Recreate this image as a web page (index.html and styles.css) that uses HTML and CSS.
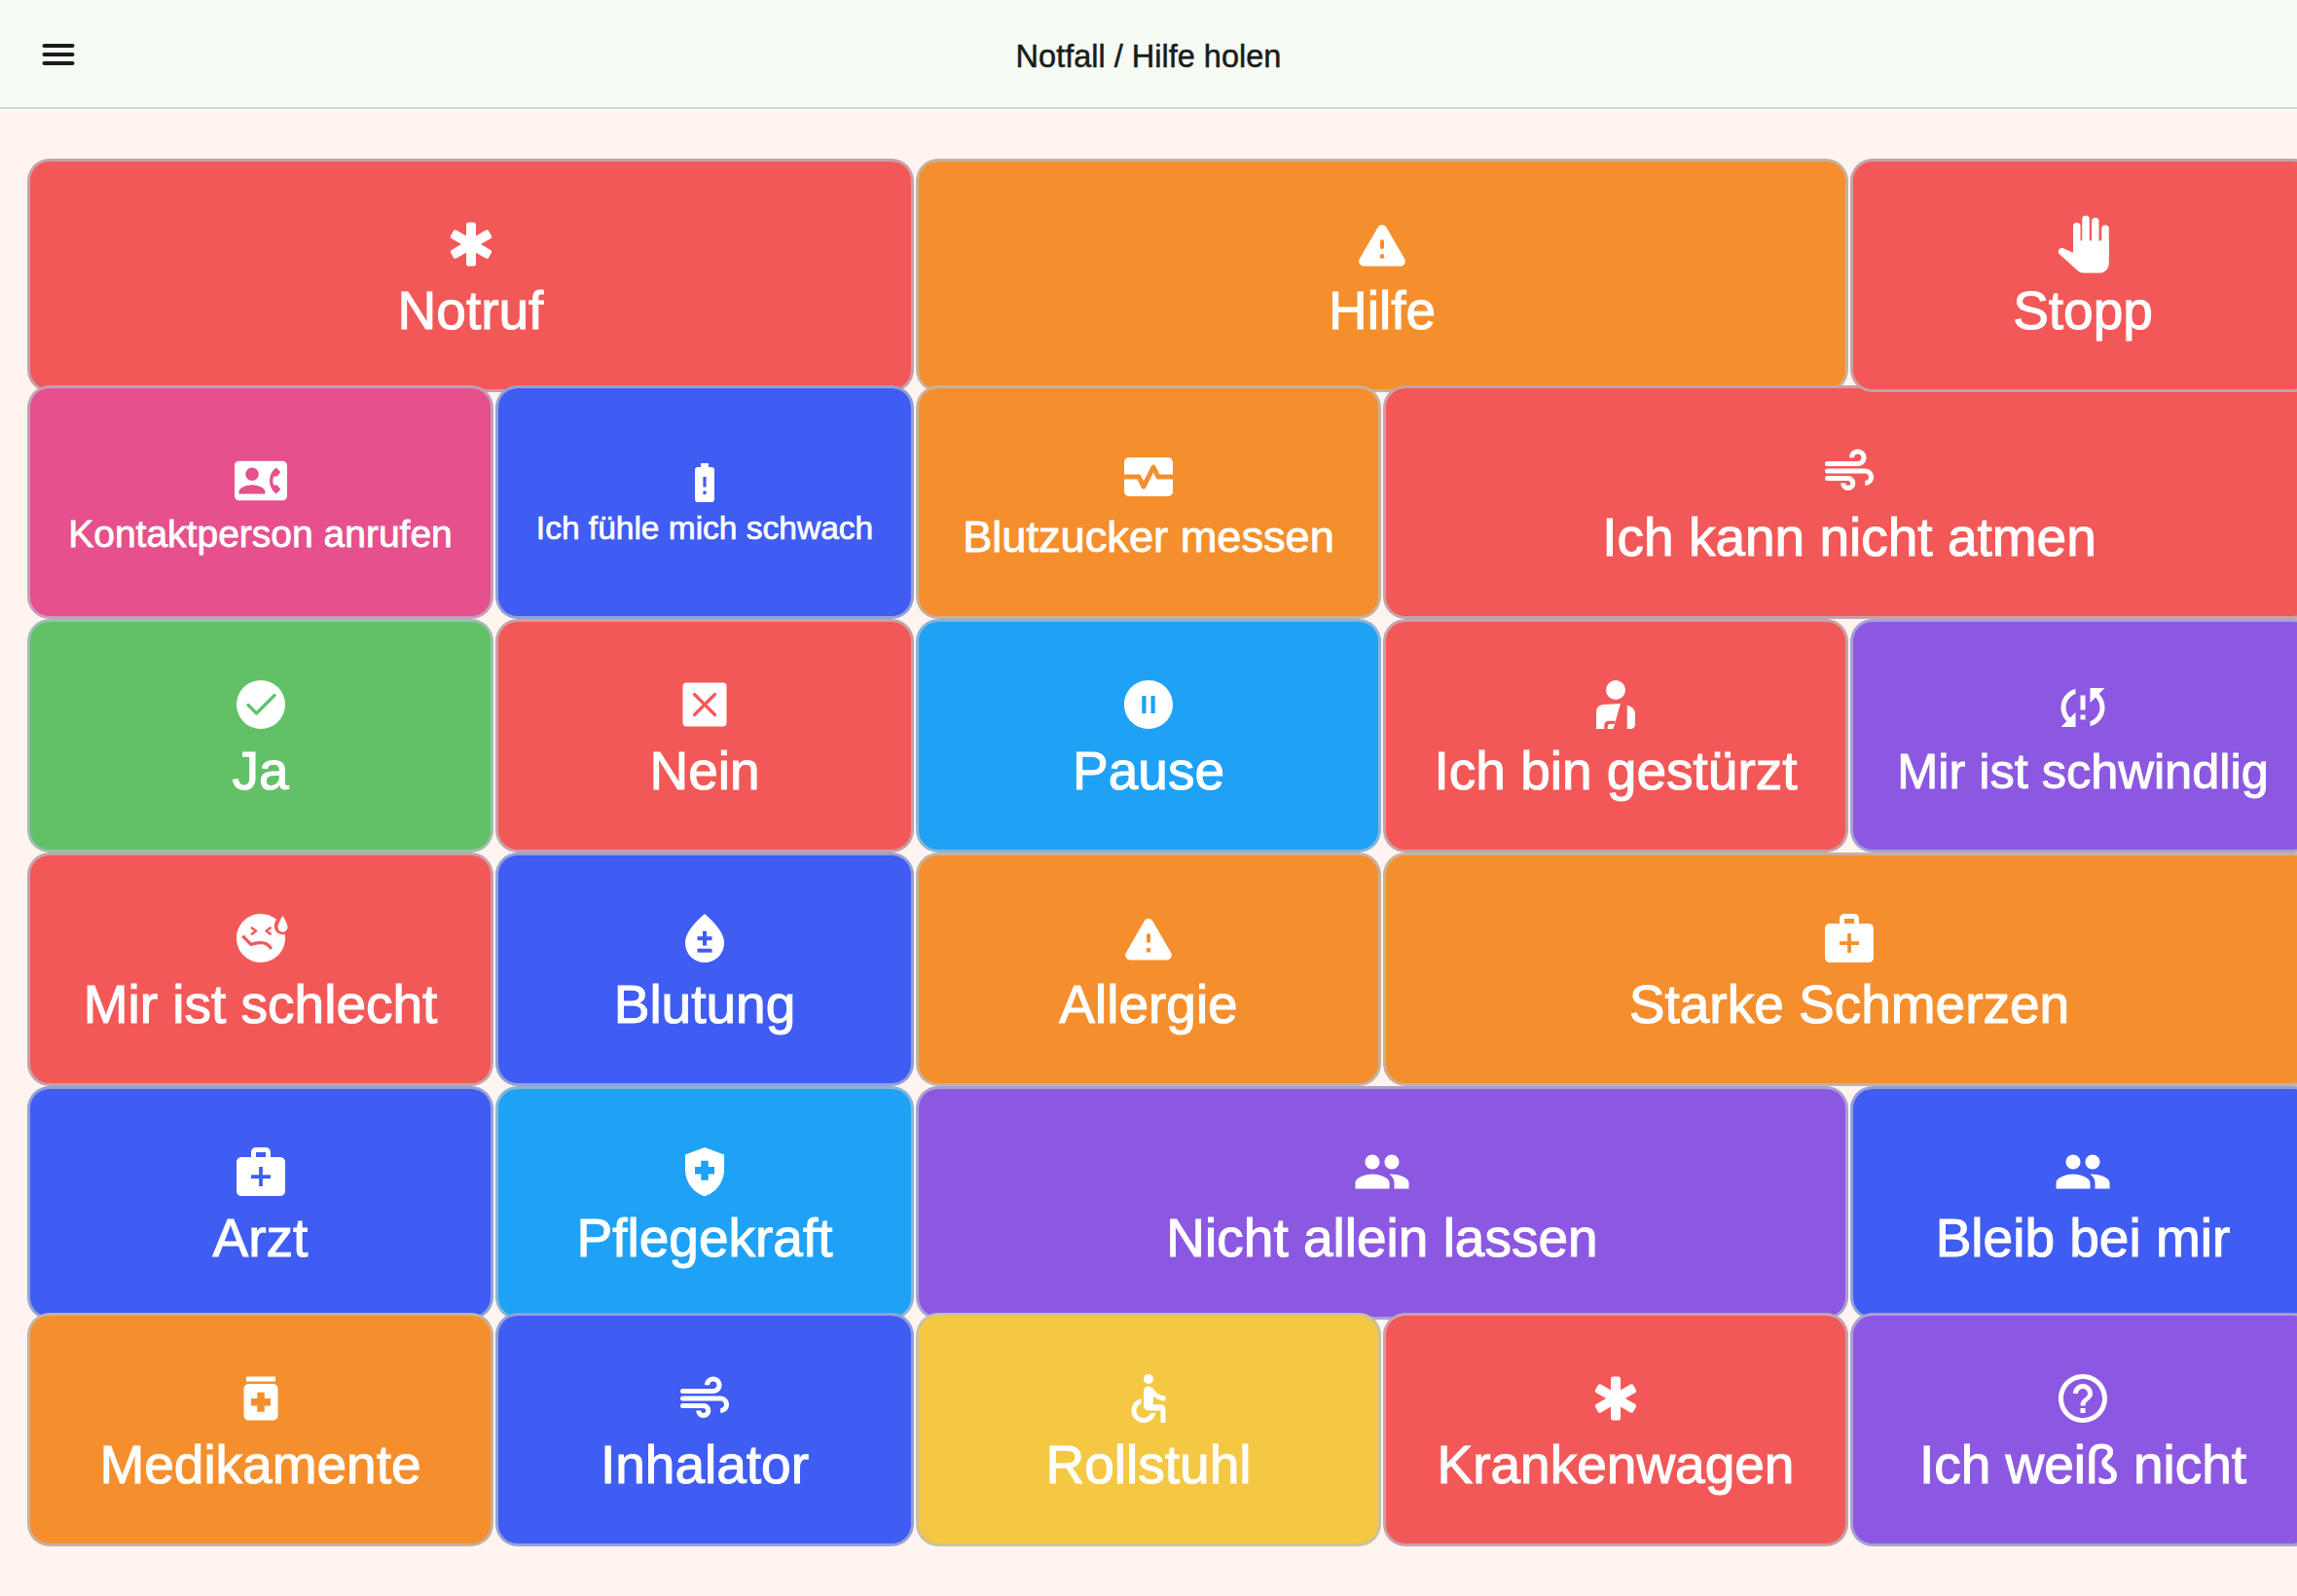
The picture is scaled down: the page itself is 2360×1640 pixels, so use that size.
FILE: index.html
```html
<!DOCTYPE html>
<html lang="de">
<head>
<meta charset="utf-8">
<title>Notfall / Hilfe holen</title>
<link rel="stylesheet" href="styles.css">
</head>
<body>
<svg class="defs" width="0" height="0" aria-hidden="true">
  <symbol id="i-emergency" viewBox="0 0 24 24"><rect x="10" y="3" width="4" height="18" rx="1"/><rect x="10" y="3" width="4" height="18" rx="1" transform="rotate(60 12 12)"/><rect x="10" y="3" width="4" height="18" rx="1" transform="rotate(-60 12 12)"/></symbol>
  <symbol id="i-warning" viewBox="0 0 24 24"><path fill-rule="evenodd" d="M4.470 21h15.060c1.540 0 2.500-1.670 1.730-3L13.730 4.990c-.77-1.330-2.690-1.330-3.460 0L2.740 18c-.77 1.330.19 3 1.730 3zM12 14c-.48 0-.8-.4-.8-.9v-2.200c0-.5.32-.9.8-.9s.8.4.8.9v2.200c0 .5-.32.9-.8.9zm.85 3.800h-1.700v-1.700h1.700v1.700z"/></symbol>
  <symbol id="i-air" viewBox="0 0 24 24"><path d="M14.500 17c0 1.650-1.350 3-3 3s-3-1.350-3-3h2c0 .55.45 1 1 1s1-.45 1-1-.45-1-1-1H3a1 1 0 0 1 0-2h8.500c1.650 0 3 1.350 3 3zM19 6.500C19 4.570 17.430 3 15.500 3S12 4.570 12 6.500h2c0-.83.67-1.500 1.500-1.500s1.500.67 1.500 1.500S16.330 8 15.500 8H3a1 1 0 0 0 0 2h12.500c1.930 0 3.500-1.570 3.500-3.500zm-.5 4.500H3a1 1 0 0 0 0 2h15.500c.83 0 1.500.67 1.500 1.500s-.67 1.500-1.500 1.500v2c1.930 0 3.500-1.570 3.500-3.500S20.430 11 18.500 11z"/></symbol>
  <symbol id="i-medical" viewBox="0 0 24 24"><path fill-rule="evenodd" d="M20 6h-4V4c0-1.100-.9-2-2-2h-4c-1.100 0-2 .9-2 2v2H4c-1.100 0-2 .9-2 2v12c0 1.100.9 2 2 2h16c1.100 0 2-.9 2-2V8c0-1.100-.9-2-2-2zM10 4h4v2h-4V4zm6 10.750h-3.250V18h-1.500v-3.250H8v-1.500h3.250V10h1.500v3.250H16v1.500z"/></symbol>
  <symbol id="i-group" viewBox="0 0 24 24"><path d="M16 11c1.660 0 2.990-1.340 2.990-3S17.660 5 16 5c-1.660 0-3 1.340-3 3s1.340 3 3 3zm-8 0c1.660 0 2.990-1.340 2.990-3S9.660 5 8 5C6.340 5 5 6.340 5 8s1.340 3 3 3zm0 2c-2.330 0-7 1.170-7 3.500V19h14v-2.500c0-2.330-4.670-3.500-7-3.500zm8 0c-.29 0-.62.02-.97.05 1.160.84 1.970 1.970 1.970 3.450V19h6v-2.500c0-2.330-4.670-3.500-7-3.500z"/></symbol>
</svg>

<header class="topbar">
  <button class="menu-btn" aria-label="Menü">
    <svg class="menu-icon" viewBox="0 0 24 24"><rect x="3" y="6" width="18" height="2.200" rx="1.100"/><rect x="3" y="10.900" width="18" height="2.200" rx="1.100"/><rect x="3" y="15.800" width="18" height="2.200" rx="1.100"/></svg>
  </button>
  <h1 class="title">Notfall / Hilfe holen</h1>
</header>

<main class="board">
  <button class="tile wide red">
    <svg class="icon"><use href="#i-emergency"/></svg><span class="label">Notruf</span>
  </button>
  <button class="tile wide orange">
    <svg class="icon"><use href="#i-warning"/></svg><span class="label">Hilfe</span>
  </button>
  <button class="tile pink">
    <svg class="icon icon-54" viewBox="0 0 24 24"><path fill-rule="evenodd" d="M22 3H2C.9 3 0 3.900 0 5v14c0 1.100.9 2 2 2h20c1.100 0 1.990-.9 1.990-2L24 5c0-1.100-.9-2-2-2zM8 6c1.660 0 3 1.340 3 3s-1.340 3-3 3-3-1.340-3-3 1.340-3 3-3zm6 12H2v-1c0-2 4-3.100 6-3.100s6 1.100 6 3.100v1zm3.850-4h1.640L21 16l-1.990 1.990c-1.310-.98-2.280-2.380-2.730-3.990-.18-.64-.28-1.310-.28-2s.1-1.360.28-2c.45-1.620 1.420-3.010 2.730-3.990L21 8l-1.510 2h-1.640c-.22.63-.35 1.300-.35 2s.13 1.370.35 2z"/></svg>
    <span class="label size-39">Kontaktperson anrufen</span>
  </button>
  <button class="tile tile-tight blue">
    <svg class="icon icon-48" viewBox="0 0 24 24"><path fill-rule="evenodd" d="M15.670 4H14V2h-4v2H8.330C7.600 4 7 4.600 7 5.330v15.330C7 21.400 7.600 22 8.330 22h7.330c.74 0 1.340-.6 1.340-1.330V5.330C17 4.600 16.400 4 15.670 4zM12.800 18h-1.600v-1.800h1.600V18zm0-3.700h-1.600V9h1.600v5.300z"/></svg>
    <span class="label size-33">Ich fühle mich schwach</span>
  </button>
  <button class="tile orange">
    <svg class="icon" viewBox="0 0 24 24"><path d="M15.110 12.450L14 10.240l-3.110 6.210c-.16.34-.51.55-.89.55s-.73-.21-.89-.55L7.380 13H2v5c0 1.100.9 2 2 2h16c1.100 0 2-.9 2-2v-5h-6c-.38 0-.73-.21-.89-.55z"/><path d="M20 4H4c-1.100 0-2 .9-2 2v5h6c.38 0 .73.21.89.55L10 13.760l3.110-6.210c.34-.68 1.450-.68 1.790 0L16.620 11H22V6c0-1.100-.9-2-2-2z"/></svg>
    <span class="label size-45">Blutzucker messen</span>
  </button>
  <button class="tile wide red">
    <svg class="icon"><use href="#i-air"/></svg><span class="label">Ich kann nicht atmen</span>
  </button>
  <button class="tile red stop">
    <svg class="icon" viewBox="0 0 24 24"><rect x="8" y="3.100" width="3" height="14" rx="1.500"/><rect x="11.700" y=".2" width="3" height="15" rx="1.500"/><rect x="15.600" y="1.100" width="3" height="15" rx="1.500"/><rect x="19.700" y="4.100" width="3" height="14" rx="1.500"/><path d="M8 10.500H22.700V20a3.800 3.800 0 0 1-3.800 3.800H12.500q-1.500 0-2.600-.9L2.500 16.200a1.500 1.500 0 0 1 1.400-2.600L8 15.500Z"/></svg>
    <span class="label">Stopp</span>
  </button>

  <button class="tile green">
    <svg class="icon" viewBox="0 0 24 24"><circle cx="12" cy="12" r="10"/><polyline class="cut cut-green" points="6.800,12.200 10.200,15.600 17.600,8.200"/></svg>
    <span class="label">Ja</span>
  </button>
  <button class="tile red">
    <svg class="icon" viewBox="0 0 24 24"><rect x="3" y="3" width="18" height="18" rx="1.500"/><path class="cut cut-red" d="M7.800 7.800 16.200 16.200M16.200 7.800 7.800 16.200"/></svg>
    <span class="label">Nein</span>
  </button>
  <button class="tile sky">
    <svg class="icon" viewBox="0 0 24 24"><path fill-rule="evenodd" d="M12 2C6.480 2 2 6.480 2 12s4.480 10 10 10 10-4.480 10-10S17.520 2 12 2zm-1 13.600H9.300V8.400H11v7.200zm3.700 0H13V8.400h1.700v7.200z"/></svg>
    <span class="label">Pause</span>
  </button>
  <button class="tile red">
    <svg class="icon" viewBox="0 0 24 24"><circle cx="12" cy="6" r="4"/><path fill-rule="evenodd" d="M4 22V15Q4 12.200 7 12L14 11.600 11 22ZM7.300 22V20.500Q7.300 18.700 9.200 18.700H11.800L11.400 20H9.600Q8.700 20 8.700 21V22Z"/><path d="M16.700 12.300Q20 13 20 16V20Q20 22 18 22H16.700Z"/></svg>
    <span class="label">Ich bin gestürzt</span>
  </button>
  <button class="tile purple">
    <svg class="icon" viewBox="0 0 24 24"><path d="M3 12c0 2.210.91 4.200 2.360 5.640L3 20h6v-6l-2.240 2.240C5.680 15.150 5 13.660 5 12c0-2.610 1.670-4.830 4-5.650V4.260C5.550 5.150 3 8.270 3 12zm8 5h2v-2h-2v2zM21 4h-6v6l2.240-2.240C18.320 8.850 19 10.340 19 12c0 2.610-1.670 4.830-4 5.650v2.090c3.450-.89 6-4.010 6-7.740 0-2.210-.91-4.200-2.360-5.640L21 4zm-10 9h2V7h-2v6z"/></svg>
    <span class="label size-50">Mir ist schwindlig</span>
  </button>

  <button class="tile red">
    <svg class="icon" viewBox="0 0 24 24"><path fill-rule="evenodd" d="M21 9.500c1.100 0 2-.9 2-2.200 0-1.200-2-4.500-2-4.500s-2 3.300-2 4.500c0 1.300.9 2.200 2 2.200zm-3.500-2.500c0-.73.41-1.710.92-2.660C16.680 2.880 14.440 2 11.990 2 6.470 2 2 6.480 2 12s4.470 10 9.990 10C17.520 22 22 17.520 22 12c0-.55-.06-1.090-.14-1.620-.28.07-.56.12-.86.12-1.930 0-3.500-1.570-3.500-3.500z"/><path class="cut cut-red cut-thin" d="M8.300 7.800 10 9 8.300 10.300M15.900 7.800 14.200 9 15.900 10.300"/><path class="cut cut-red" d="M4.900 11.500 8 14.600Q10 13.800 12 13.800 14.600 13.800 16 16"/></svg>
    <span class="label">Mir ist schlecht</span>
  </button>
  <button class="tile blue">
    <svg class="icon" viewBox="0 0 24 24"><path fill-rule="evenodd" d="M12 2c-5.330 4.550-8 8.480-8 11.800 0 4.980 3.800 8.200 8 8.200s8-3.220 8-8.200c0-3.320-2.670-7.250-8-11.800zm3 15.900H9v-1.600h6v1.600zm0-5h-2.200v2.200h-1.600v-2.200H9v-1.600h2.200V9.100h1.600v2.200H15v1.600z"/></svg>
    <span class="label">Blutung</span>
  </button>
  <button class="tile orange">
    <svg class="icon"><use href="#i-warning"/></svg><span class="label">Allergie</span>
  </button>
  <button class="tile wide orange">
    <svg class="icon"><use href="#i-medical"/></svg><span class="label">Starke Schmerzen</span>
  </button>

  <button class="tile blue">
    <svg class="icon"><use href="#i-medical"/></svg><span class="label">Arzt</span>
  </button>
  <button class="tile sky">
    <svg class="icon" viewBox="0 0 24 24"><path fill-rule="evenodd" d="M10.500 13H8v-3h2.500V7.500h3V10H16v3h-2.500v2.500h-3V13zM12 2L4 5v6.090c0 5.050 3.410 9.760 8 10.910 4.590-1.150 8-5.860 8-10.910V5l-8-3z"/></svg>
    <span class="label">Pflegekraft</span>
  </button>
  <button class="tile wide purple">
    <svg class="icon"><use href="#i-group"/></svg><span class="label">Nicht allein lassen</span>
  </button>
  <button class="tile blue">
    <svg class="icon"><use href="#i-group"/></svg><span class="label">Bleib bei mir</span>
  </button>

  <button class="tile orange">
    <svg class="icon" viewBox="0 0 24 24"><path fill-rule="evenodd" d="M6 3h12v2H6zm11 3H7c-1.100 0-2 .9-2 2v11c0 1.100.9 2 2 2h10c1.100 0 2-.9 2-2V8c0-1.100-.9-2-2-2zm-1 9h-2.500v2.500h-3V15H8v-3h2.500V9.500h3V12H16v3z"/></svg>
    <span class="label">Medikamente</span>
  </button>
  <button class="tile blue">
    <svg class="icon"><use href="#i-air"/></svg><span class="label">Inhalator</span>
  </button>
  <button class="tile yellow">
    <svg class="icon" viewBox="0 0 24 24"><circle cx="12" cy="4" r="2"/><path d="M19 13v-2c-1.540.02-3.090-.75-4.070-1.830l-1.290-1.430c-.17-.19-.38-.34-.61-.45-.01 0-.01-.01-.02-.01H13c-.35-.2-.75-.3-1.190-.26C10.760 7.110 10 8.040 10 9.090V15c0 1.100.9 2 2 2h5v5h2v-5.500c0-1.100-.9-2-2-2h-3v-3.450c1.290 1.070 3.250 1.940 5 1.950zm-6.170 5c-.41 1.160-1.520 2-2.830 2-1.660 0-3-1.340-3-3 0-1.310.84-2.410 2-2.830V12.100c-2.280.46-4 2.480-4 4.900 0 2.760 2.240 5 5 5 2.420 0 4.440-1.720 4.900-4h-2.070z"/></svg>
    <span class="label">Rollstuhl</span>
  </button>
  <button class="tile red">
    <svg class="icon"><use href="#i-emergency"/></svg><span class="label">Krankenwagen</span>
  </button>
  <button class="tile purple">
    <svg class="icon" viewBox="0 0 24 24"><path fill-rule="evenodd" d="M11 18h2v-2h-2v2zm1-16C6.480 2 2 6.480 2 12s4.480 10 10 10 10-4.480 10-10S17.520 2 12 2zm0 18c-4.410 0-8-3.590-8-8s3.590-8 8-8 8 3.590 8 8-3.590 8-8 8zm0-14c-2.210 0-4 1.790-4 4h2c0-1.100.9-2 2-2s2 .9 2 2c0 2-3 1.750-3 5h2c0-2.250 3-2.500 3-5 0-2.210-1.790-4-4-4z"/></svg>
    <span class="label">Ich weiß nicht</span>
  </button>
</main>
</body>
</html>
```
FILE: styles.css
```css
* { box-sizing: border-box; }

html, body {
  margin: 0;
  height: 100%;
  overflow: hidden;
  background: #fff4f0;
  font-family: "Liberation Sans", Arial, sans-serif;
}

.defs { display: block; height: 0; }

.topbar {
  position: relative;
  height: 112px;
  display: flex;
  align-items: center;
  justify-content: center;
  background: #f6fbf4;
  border-bottom: 2px solid #cfdad2;
}

.menu-btn {
  position: absolute;
  left: 38px;
  top: 34px;
  width: 44px;
  height: 44px;
  padding: 0;
  border: 0;
  background: none;
}

.menu-icon { display: block; width: 44px; height: 44px; fill: #1a1c1a; }

.title {
  margin: 6px 0 0;
  font-size: 32.5px;
  font-weight: 400;
  color: #1a1c1a;
  -webkit-text-stroke: 0.5px #1a1c1a;
}

.board {
  display: grid;
  width: max-content;
  padding: 51px 0 0 28px;
  grid-template-columns: 479px 430px 478px 478px 478px;
  grid-template-rows: 231px 238px 238px 238px 231px 238px;
  column-gap: 2px;
  row-gap: 2px;
}

.tile {
  height: 240px;
  align-self: start;
  display: flex;
  flex-direction: column;
  align-items: center;
  justify-content: center;
  gap: 6px;
  padding: 6px 0 0;
  color: #fff;
  border: 3px solid rgba(181, 191, 202, 0.7);
  border-radius: 23px;
  font-family: inherit;
}

.tile-tight { gap: 4px; padding-top: 2px; }

.wide { grid-column: span 2; }
.stop { grid-column: 5; grid-row: 1; }

.red { background: #f35858; }
.orange { background: #f58f2d; }
.pink { background: #e6508c; }
.blue { background: #3f5cf3; }
.green { background: #62c167; }
.sky { background: #1fa2f5; }
.purple { background: #8c58e1; }
.yellow { background: #f5c843; }

.icon { flex: none; width: 60px; height: 60px; fill: #fff; }
.icon-54 { width: 54px; height: 54px; }
.icon-48 { width: 48px; height: 48px; }

.cut {
  fill: none;
  stroke-width: 1.3;
  stroke-linecap: round;
  stroke-linejoin: round;
}
.cut-thin { stroke-width: 1; }
.cut-green { stroke: #62c167; }
.cut-red { stroke: #f35858; }

.label {
  font-size: 55px;
  white-space: nowrap;
  -webkit-text-stroke: 1.1px #fff;
}
.size-50 { font-size: 50.5px; -webkit-text-stroke-width: 1px; }
.size-45 { font-size: 45.2px; -webkit-text-stroke-width: 0.9px; }
.size-39 { font-size: 39px; -webkit-text-stroke-width: 0.8px; }
.size-33 { font-size: 33.5px; -webkit-text-stroke-width: 0.7px; }
```
